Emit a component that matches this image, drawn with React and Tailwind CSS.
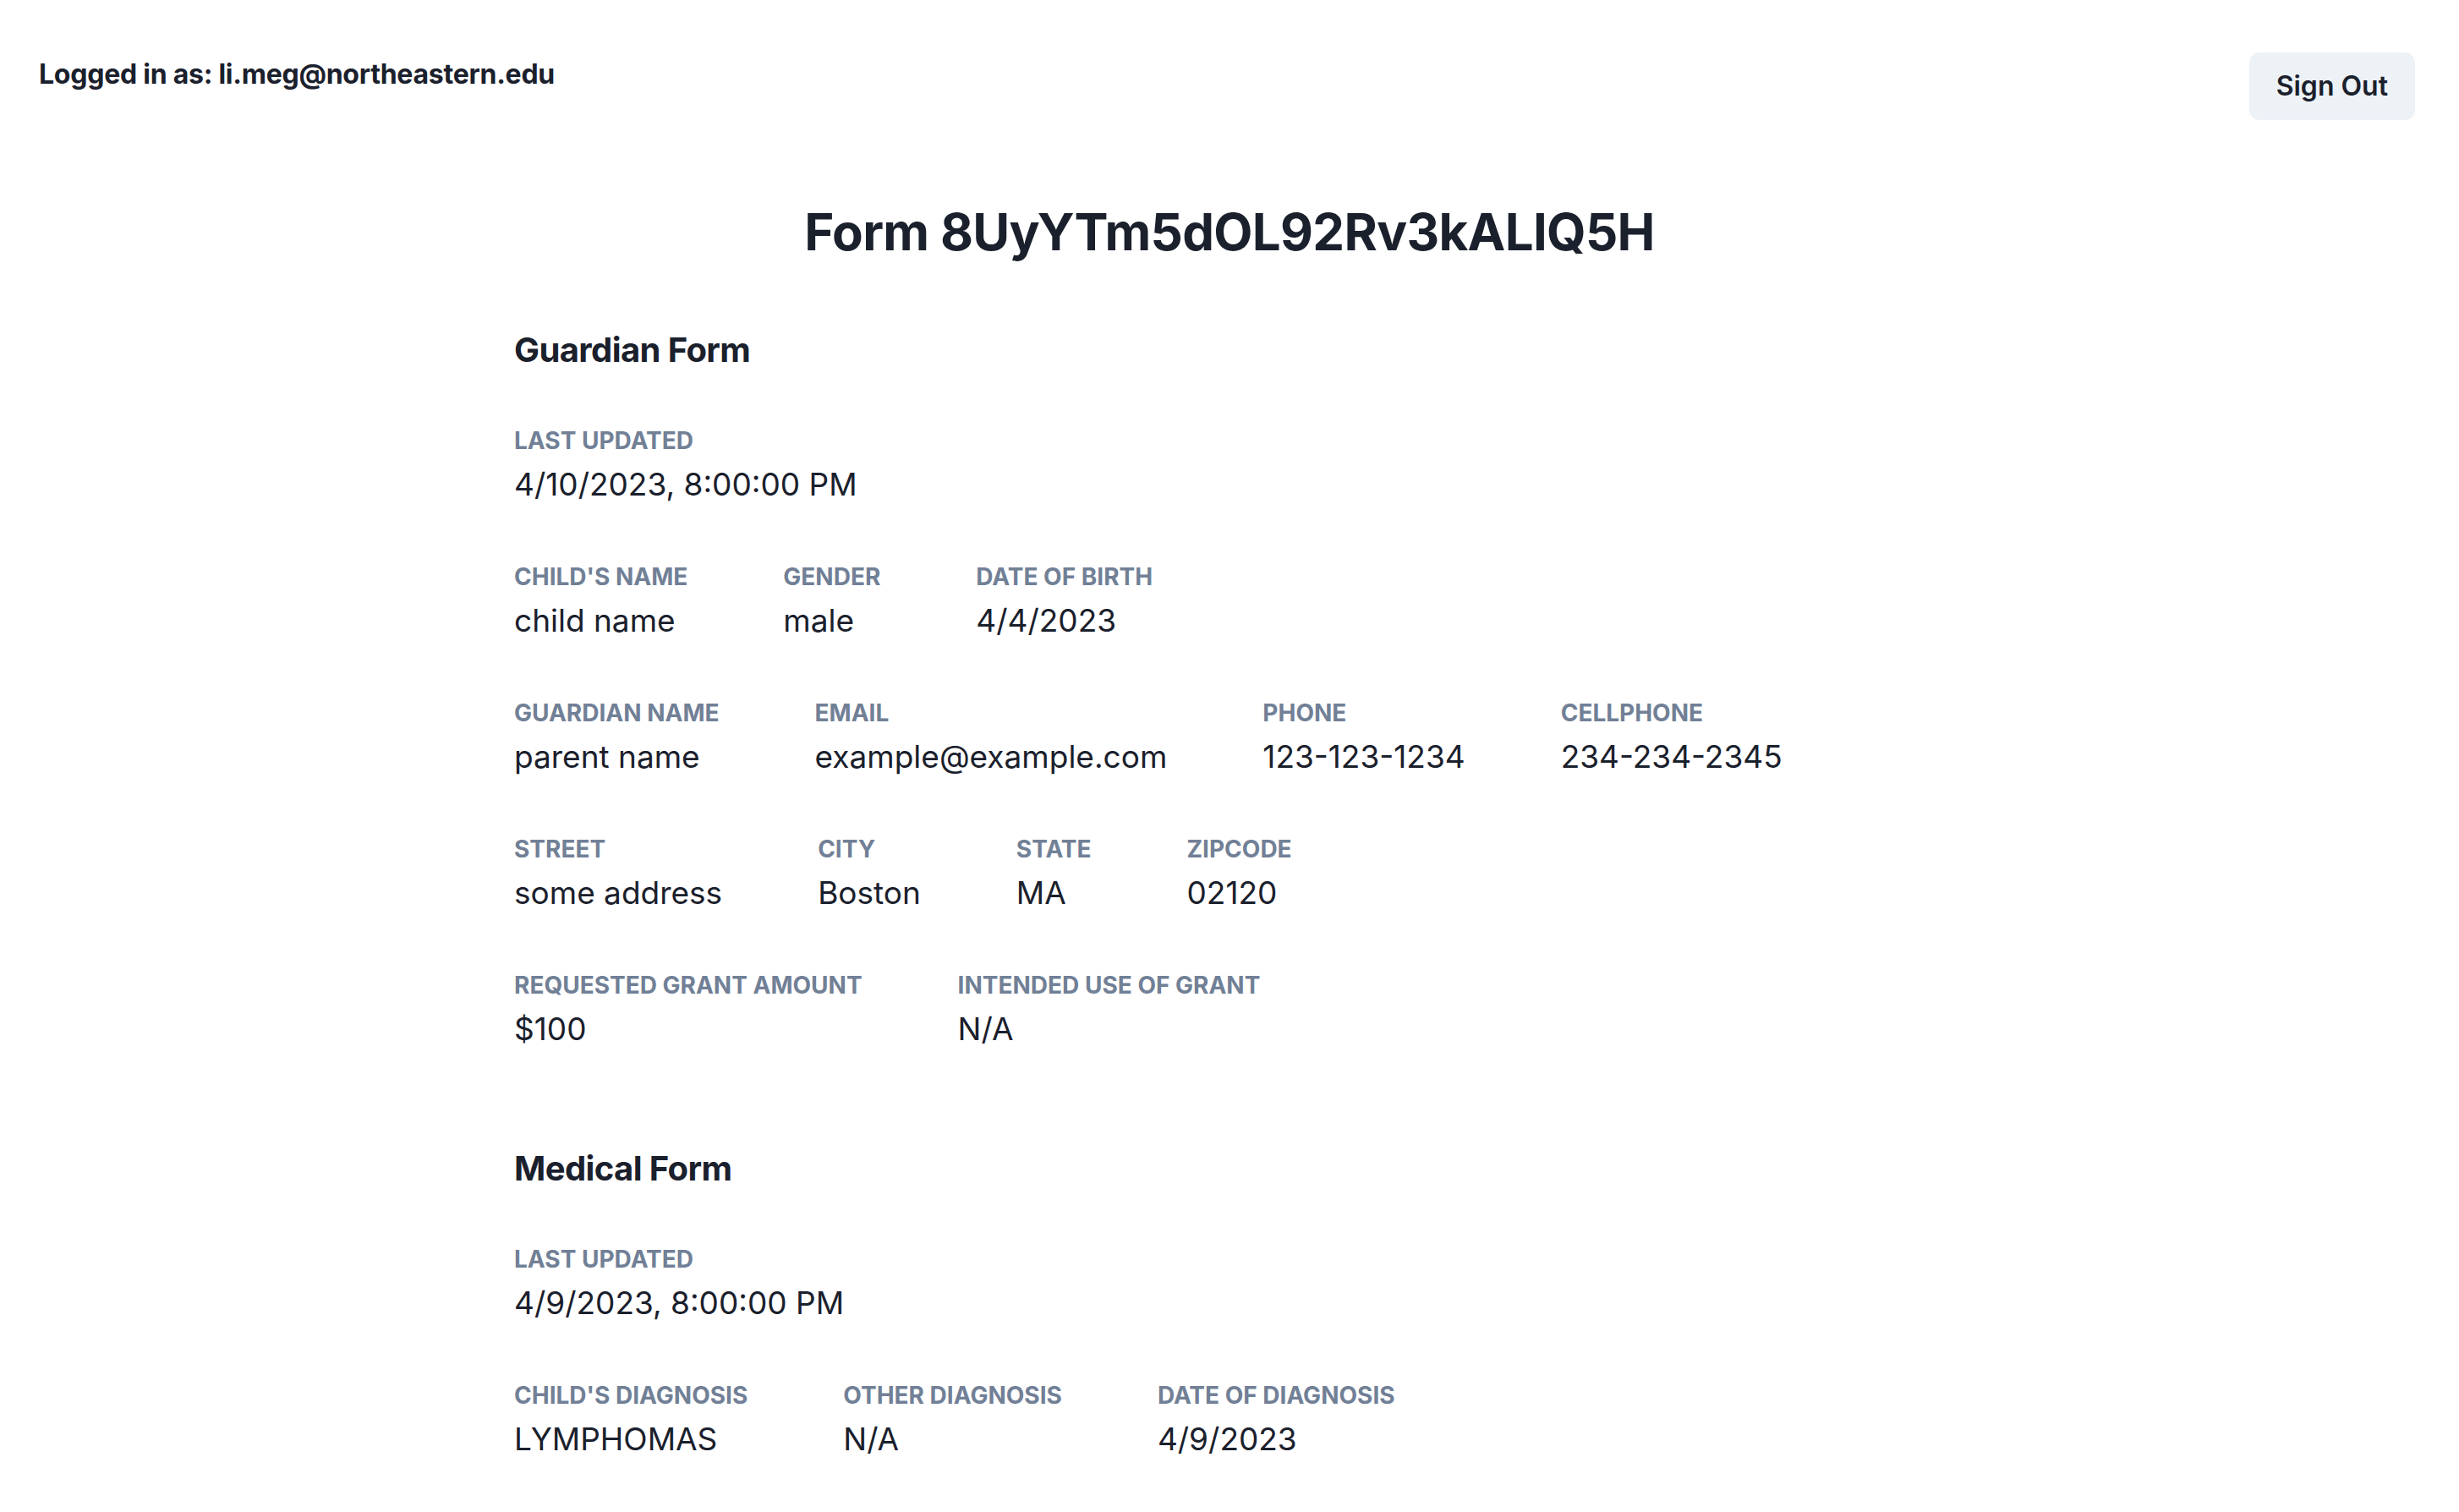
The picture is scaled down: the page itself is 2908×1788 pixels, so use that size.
import React from 'react';

const guardianRows = [
  [{ label: 'Last Updated', value: '4/10/2023, 8:00:00 PM' }],
  [
    { label: "Child's Name", value: 'child name' },
    { label: 'Gender', value: 'male' },
    { label: 'Date of Birth', value: '4/4/2023' },
  ],
  [
    { label: 'Guardian Name', value: 'parent name' },
    { label: 'Email', value: 'example@example.com' },
    { label: 'Phone', value: '123-123-1234' },
    { label: 'Cellphone', value: '234-234-2345' },
  ],
  [
    { label: 'Street', value: 'some address' },
    { label: 'City', value: 'Boston' },
    { label: 'State', value: 'MA' },
    { label: 'Zipcode', value: '02120' },
  ],
  [
    { label: 'Requested Grant Amount', value: '$100' },
    { label: 'Intended Use of Grant', value: 'N/A' },
  ],
];

const medicalRows = [
  [{ label: 'Last Updated', value: '4/9/2023, 8:00:00 PM' }],
  [
    { label: "Child's Diagnosis", value: 'LYMPHOMAS' },
    { label: 'Other Diagnosis', value: 'N/A' },
    { label: 'Date of Diagnosis', value: '4/9/2023' },
  ],
];

// one label / value pair
const Field = ({ label, value }) => (
  <div className="flex flex-col">
    <span className="text-[28px] leading-[40px] font-bold uppercase text-[#718096]">{label}</span>
    <span className="text-[37px] leading-[64px] text-[#1a202c]">{value}</span>
  </div>
);

const Section = ({ title, rows }) => (
  <section>
    <h2 className="text-[40px] leading-[48px] font-bold tracking-[-0.6px] text-[#1a202c]">{title}</h2>
    <div className="mt-[63px] flex flex-col gap-[57px]">
      {rows.map((row, i) => (
        <div key={i} className="flex gap-[113px]">
          {row.map((f) => (
            <Field key={f.label} label={f.label} value={f.value} />
          ))}
        </div>
      ))}
    </div>
  </section>
);

export default function App() {
  return (
    <div className="min-h-screen bg-white font-['Inter',sans-serif] text-[#1a202c]">
      {/* header */}
      <div className="flex items-start justify-between pt-[62px] pl-[46px] pr-[52px]">
        <p className="mt-[2px] text-[32px] leading-[48px] font-bold tracking-[-0.25px]">
          Logged in as: li.meg@northeastern.edu
        </p>
        <button
          type="button"
          className="h-[80px] px-[32px] rounded-[12px] bg-[#edf2f7] text-[32px] font-semibold text-[#1a202c]"
        >
          Sign Out
        </button>
      </div>

      <h1 className="mt-[96px] text-center text-[60px] leading-[72px] font-bold tracking-[-0.7px]">
        Form 8UyYTm5dOL92Rv3kALIQ5H
      </h1>

      <div className="w-[1692px] mx-auto mt-[80px] pb-[80px] flex flex-col gap-[109px]">
        <Section title="Guardian Form" rows={guardianRows} />
        <Section title="Medical Form" rows={medicalRows} />
      </div>
    </div>
  );
}
